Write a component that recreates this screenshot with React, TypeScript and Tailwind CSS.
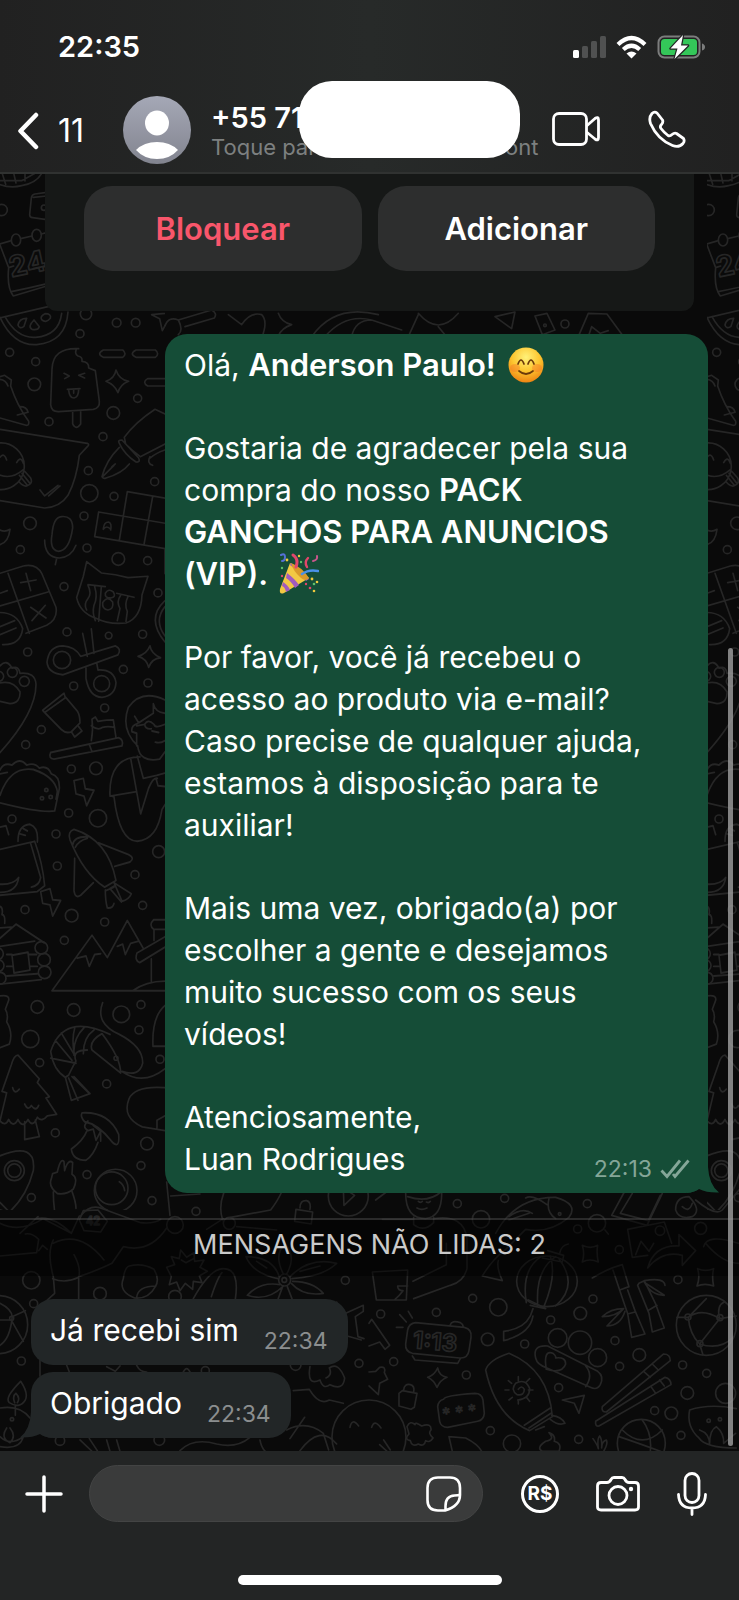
type Dot = [number, number, number];

const Dots = ({ items }: { items: Dot[] }) => (
    <>
        {items.map(([x, y, r]) => (
            <circle key={`${x}-${y}`} cx={x} cy={y} r={r} />
        ))}
    </>
);

const upperDots: Dot[] = [
    [5, 150, 17], [132, 143, 8], [258, 462, 17], [240, 521, 12], [350, 488, 13], [407, 488, 13],
    [29, 577, 12], [107, 605, 12], [103, 673, 19], [147, 785, 12], [340, 759, 19], [413, 715, 12],
    [309, 830, 12], [265, 932, 12], [464, 965, 12], [268, 1000, 26], [342, 1009, 12], [252, 1068, 12],
    [90, 1090, 19], [61, 1169, 12], [261, 1164, 12], [355, 1197, 19], [443, 1202, 12], [192, 1280, 12],
    [474, 1299, 12], [201, 1416, 12], [326, 1427, 10], [428, 1423, 12],
];

const lowerDots: Dot[] = [
    [83, 36, 12], [370, 88, 12], [221, 138, 12], [444, 129, 12], [314, 204, 12], [124, 269, 12],
    [77, 314, 12], [214, 387, 12], [288, 385, 19], [206, 519, 12], [294, 535, 26], [36, 537, 12],
    [168, 582, 12], [172, 678, 12], [405, 704, 12], [476, 635, 18], [75, 809, 12], [215, 827, 19],
    [428, 796, 12], [314, 846, 12], [193, 901, 12], [112, 1101, 19], [221, 1110, 19], [364, 1123, 25],
    [423, 1094, 12], [417, 1170, 12], [91, 1197, 26], [119, 1268, 12], [480, 1258, 12], [320, 1332, 12],
    [166, 1479, 12], [441, 1511, 19], [423, 1577, 12], [261, 1604, 12], [94, 1673, 12], [456, 1682, 12],
    [139, 450, 5], [126, 475, 5], [152, 471, 5], [348, 1255, 6],
];

const bottomLeftDots: Dot[] = [
    [588, 94, 12], [94, 301, 26], [300, 341, 19], [525, 350, 19], [101, 371, 12], [64, 543, 12],
    [1036, 301, 12], [1077, 550, 12], [887, 555, 16], [616, 572, 12], [35, 415, 6], [478, 780, 16],
    [180, 782, 14], [854, 300, 18], [688, 130, 18], [525, 135, 25], [36, 718, 5], [853, 300, 7],
];

const bottomRightDots: Dot[] = [
    [265, 71, 12], [407, 55, 12], [655, 71, 12], [336, 118, 26], [626, 147, 12], [751, 209, 12],
    [873, 152, 14], [995, 145, 18], [927, 299, 12], [311, 355, 12], [388, 382, 26], [672, 357, 12],
    [35, 402, 12], [202, 397, 12], [356, 478, 19], [545, 420, 12], [634, 400, 19], [467, 492, 12],
    [738, 482, 12], [811, 525, 19], [566, 474, 28], [633, 488, 35], [686, 533, 27], [752, 559, 12],
    [941, 555, 12], [1013, 580, 12], [955, 639, 19], [74, 545, 12], [292, 585, 12], [569, 623, 12],
    [857, 692, 12], [907, 700, 19], [936, 766, 12], [364, 752, 12], [429, 791, 26], [629, 778, 12],
    [684, 130, 26], [1019, 722, 5], [1053, 718, 5], [572, 102, 4],
];

// Doodle chat wallpaper. The left column repeats at the right edge.
const Wallpaper = () => (
    <svg
        aria-hidden="true"
        viewBox="0 174 739 1277"
        preserveAspectRatio="xMidYMin slice"
        className="absolute inset-0 h-full w-full fill-none stroke-[#262626]"
        strokeWidth="5"
        strokeLinecap="round"
        strokeLinejoin="round"
    >
        <defs>
            <clipPath id="above-divider">
                <rect x="0" y="174" width="165" height="1036" />
            </clipPath>
            <g id="doodle-column" clipPath="url(#above-divider)">
                <g transform="translate(0 160) scale(0.3333)">
                    <Dots items={upperDots} />
                    <path d="M-5 72q35 14 70 5q45-8 60-37M5 35l12 38M40 35l8 34M75 35v28M-5 62h70l40-22" />
                    <path d="M140 97l-35 5q-10 2-11 12l-5 50q0 8 9 9l42 6M100 112l40-4" />
                    <path d="M0 252l34-10M62 236l34-8M124 222l30-8M0 255l26 68q-6 60 14 85l108-32M34 395q50-10 108-24M26 323l15-5M100 326l45-10" />
                    <ellipse cx="48" cy="240" rx="14" ry="18" />
                    <ellipse cx="110" cy="226" rx="14" ry="18" />
                    <text x="34" y="352" fontSize="86" fontWeight="700" fontFamily="Inter, sans-serif" transform="rotate(-12 34 352)">24</text>
                    <path d="M-5 475L160 436M0 472q40 86 110 82q88-8 94-98M15 470q36 66 92 62q70-6 78-72" />
                    <path d="M135 461q20 0 16 14q-14 16-26 4q-6-10 10-18zM102 480q-20 20-6 28q18 4 22-8zM80 475q-22 0-26 20q4 14 18 4z" />
                    <path d="M455 464l62-6l-30 54l-8-36z" />
                    <path d="M236 566q-78-4-80 62l-4 106q2 22 24 21l104-7q20-4 18-24l-12-92l-20-8q2-18-20-20q2-14-12-16q-12-6-4-22zM218 754v38q10 20 24 0v-40M192 640l16 8l-14 8M254 640l-18 6l18 8M202 688l38-2M206 690q2 24 16 24q14-2 14-26M221 688v12" />
                    <path d="M310 570h58q14 12 0 22h-58q-22-10 0-22zM408 570h58q14 12 0 22h-58q-22-10 0-22zM495 656h-52q-18 10 0 22h52" />
                    <path d="M348 630q10 30 38 34q-26 10-32 34q-10-24-36-34q26-8 30-34z" />
                    <path d="M0 650l14-4l20 14l-2 18q20 60 54 106q2 14-8 12l-78-22M0 658q18 2 24 20M60 740q20 0 24 16M52 765l32-8" />
                    <path d="M0 808l262 42q8 4 0 10l-24 26q-8 70-34 120q-24 36-70 38L0 1022M120 990l14 18l40-32M146 1008l34-30" />
                    <path d="M-10 850a70 70 0 1 1-10 135M0 892q12-16 20 8M50 908q12-22 20 2M-5 944q40 16 74-14M58 946l24 30M66 940l22 28M74 934l18 20q8 18-12 24q-10 2-22-12" />
                    <path d="M495 762l-30-14q-60 40-92 84l4 20q20 20 44 38l74-38M358 850q-6-10 8-10l50 54q6 14-8 12q-34-22-50-56zM358 862q-40 40-52 88q4 8 12 4q48-14 70-42M308 950l34-34M336 920l10-8M450 890q-10 20 8 26M495 870q-26 8-44 24" />
                    <path d="M184 1070q34-4 34 34q-10 70-44 70q-26-6-18-50q4-52 28-54zM134 1140q0 52 44 54q36-2 50-38M170 1196l-4 18" />
                    <path d="M382 995l115 20M296 1056l200 34M284 1130l212 36M382 995l-24 146M458 1010l-26 144M296 1056l-12 74M495 1165v76" />
                    <path d="M310 1106q2-20 16-20q10 4 6 24M310 1108q10-14 22 0" />
                    <path d="M0 1110q14 8 30-2q-4 38-30 46M0 1240l70-22q40-8 56 24l42 100q6 36-28 54l-62 24M24 1240l64 180M0 1338l144-42M62 1268l46-8M78 1240l14 52M92 1342l46 32M136 1336l-40 46M0 1300l22-8" />
                    <path d="M-10 1358q60-4 78 48q-6 50-60 48M0 1400l44-18M0 1424l48-20" />
                    <path d="M260 1205l44 34q44 4 80 14l60-4l-18 56q-2 68-48 84q-50 6-90-14q-48-16-58-62l20-64zM264 1274l52 6M350 1300l52 12M264 1276q12 24 0 40q-14 18-4 34M284 1280q10 32-2 56q-6 24 4 46M304 1280l-8 104M362 1306q-14 20-2 40l-8 36M384 1310q-12 24-2 44l-4 30M316 1300q10-16 24-4q10 16-8 18q-18 0-16-14zM308 1328q14-22 30-2q4 22-14 24q-18-2-16-22z" />
                    <path d="M495 1322q-58 54 0 124M495 1340q-34 42 0 88" />
                </g>
                <g transform="translate(0 640) scale(0.3333)">
                    <Dots items={lowerDots} />
                    <circle cx="186" cy="60" r="26" />
                    <circle cx="305" cy="131" r="24" />
                    <circle cx="37" cy="97" r="15" />
                    <circle cx="73" cy="124" r="15" />
                    <circle cx="-4" cy="109" r="15" />
                    <circle cx="43" cy="1592" r="30" />
                    <circle cx="43" cy="1592" r="20" />
                    <circle cx="347" cy="1652" r="64" />
                    <circle cx="335" cy="1645" r="49" />
                </g>
                <g transform="translate(0 640) scale(0.3333 0.37)">
                    <path d="M242 44l104-28q20 8 8 24l-166 54q-44-4-47-34q6-44 48-44q36 2 53 28zM248-18l14 62M274-30l8 66M258 76v28q10 50 48 51q40-4 42-40q-6-36-54-34l-4-20" />
                    <path d="M450 16q4 22 32 32q-26 2-36 26q-6-24-32-30q26-6 36-28z" />
                    <path d="M0 70q20-20 36 6q20-8 24 14q46-4 48 30q0 76-108 184M0 116q40-8 60 24q2 30-30 32l-30-6" />
                    <path d="M192 144l-64 46l6 6l62-40zM134 196l50 46q14 12 30 6l26-24q0-20-8-32l-36-38M214 248l10 14l22-16l-10-12M152 304l204-40q16 6 10 22l-204 36q-18-2-10-18zM268 282l8 20M274 272q6-30 2-58l10-6l8 12q30-4 46-4l8 48M274 232q20 14 34 4q14-4 36 0" />
                    <path d="M495 162q-70-30-110 20q-24 60 28 104q6 46 66 36l16-20M404 206l12 18l44-26v-26q6 24 35 26M412 226q-20 6-16 22l14 4v34M410 232l24-4q10-16 28 0q4 12 33 0M434 228q2 14 20 12M456 246l20 4M466 276q14 4 29-4" />
                    <path d="M420 316q-94 0-90 104l12 4q16 120 70 120q60-4 74-86l10-14M392 320l30 150l24-70q14-30 26-26M412 314l18 60l40-8l24-6M330 422l80-12M468 374l6 20l22 2" />
                    <path d="M0 352q10-22 36-14q24-22 44 0q24-8 38 8q26-8 36 16q26 6 24 40l-14 60q-40 6-164-22M0 420q30-80 100-70q66 20 72 60l-4 20M0 362l22-4" />
                    <path d="M222 380l28-6l6 28l26 4l-22 42l-8-26l-24-6zM122 680l28-8l8 30l24 2l-24 42l-8-30l-22-4z" />
                    <path d="M0 566l104-22q24 60 30 120l-22 16L0 690M92 550l30 92q-4 22-28 26M54 544q0-44 36-46q26 8 22 48M60 524l16 4M70 510l12 6M0 506l18-4l8 24M0 660q40 2 56-18q-6 40-56 40" />
                    <path d="M222 512q-20 6-12 28q40 90 104 128l34-18q-24-110-126-138zM218 554q4-24 46-22M226 560q10-18 36-24M296 548l90 32q20 10 4 20l-46 12M224 590l-2 88q4 22 20 12l38-34M316 676q0 30 6 48q16 2 20-12M342 656l52 30q-8 16-28 20zM330 672l34 36M344 664l-14 8M316 678l26-10" />
                    <path d="M0 720q10 4 6 22q10 0 8 24M0 806l48-38l84 50M0 828l104-14M0 778l34-2M0 930l124-12M36 852l48-8l6 48l-48 8zM20 850h16M86 850h24M20 882h20M90 882h22M20 908l92-6" />
                    <ellipse cx="124" cy="832" rx="19" ry="17" />
                    <ellipse cx="132" cy="864" rx="19" ry="17" />
                    <ellipse cx="134" cy="898" rx="19" ry="17" />
                    <ellipse cx="-8" cy="848" rx="18" ry="16" />
                    <ellipse cx="-6" cy="880" rx="18" ry="16" />
                    <ellipse cx="0" cy="914" rx="18" ry="16" />
                    <path d="M156 948l120-150l46 60l60-100l48 76M156 948h340M232 860l26-6l10 28l16-32l18-2M352 828l16-6l8 28l16-30l24-6M495 756h-34q-16 14 0 26h34M462 784v28M495 802l-84 44q-8 20 8 26l76-42M454 862v60M398 948q40-26 98-26" />
                    <path d="M0 962q30-4 26 12l-10 24q10 14 4 34q20 30 8 60l-28 10" />
                    <path d="M308 980q-24 56 50 86q72 34 70 78q-10 38-62 22q64 40 130-8M330 1066q-140-60-178 46q8 50 44 70l10-6q14-26 22-38q-14-30 34-30M196 1182l18 62l56-18l-48-46M206 1184l28 60M216 1180l50 44M152 1130l76 14M166 1082l50 54M184 1062l40 60M224 1050q-10 30 0 74M252 1048q-34 30-30 74M282 1054q-32 20-32 64M306 1064q-40 20-30 44l86 62q0-40-56-106" />
                    <path d="M54 1122q-12 0-20 26l-28 72l14 4l-20 76q16 16 26-4q14 24 28 0q14 26 30 0q14 24 28-6q14 14 30-4l28-4l-32-44l10-4l-36-38l6-10q-44-44-64-64zM74 1302v48l44-8l-12-44M38 1210q6 20 20 4M74 1254q10 20 20 4q14 18 22 0" />
                    <path d="M246 1278q80-4 110 58q4 44-22 18q-40-46-80-52q-14-14-8-24zM264 1300q-20 16 0 26l16-4l8 30l14-24M260 1328q-10 24-46 48q4 30 44 30q22-12 36-48M280 1312l22 16v26" />
                    <path d="M495 1210q-90-6-108 30q-22 50 40 76l68 10M495 1286l-24 12v20M495 988q-40 30-36 110h36" />
                    <path d="M0 1394q110-40 100 40q-20 70-72 112l-28-26M0 1540l24 8" />
                    <path d="M172 1496q-28-20-18-40l4-14l14-4q10-40 20-28l2 24q10-32 24-22l-2 32q20 10 4 40q-20 16-48 12zM160 1492q0 60 18 100M216 1490q12 30 12 46M358 1464q14 8 16 24" />
                </g>
            </g>
        </defs>
        <use href="#doodle-column" />
        <use href="#doodle-column" x="707" />

        {/* strip between the contact card and the first message */}
        <g transform="translate(165 300) scale(0.3333)">
            <path d="M0 78q10-30 40-18l100-30q18 10 8 24l-88 26M40 60q16 30 0 44M190 44l40 30q26-40 60-30q20 20 0 70M340 40q10 28 40 34q-30 10-40 34M440 110q70-100 200-66M480 110q60-70 140-50M560 110q10-50 60-50l90 30M760 40q60 70 120 0M730 110l30-66M820 80l20 24M990 50l60-14l-10 50zM1110 48l36-8l24 50l-38 14zM1240 110l30-70l56 2l50 68M1270 110l10-30l26 20l24-8" />
            <circle cx="1200" cy="72" r="12" />
            <circle cx="1140" cy="76" r="4" />
        </g>

        <g transform="translate(0 1180) scale(0.3333)">
            <Dots items={bottomLeftDots} />
            <path d="M0 130q60 30 130-14l84 44l24-52M60 160l54-50M0 228l110-10l6-40q-20-20-40-16M116 212l12-16l14 12M160 180q-20 40 0 110l4 50l-44 40M236 368V290q60-20 100-40l34-50q80 20 130-56M160 190q80-40 152 50M222 224q22 40 14 68q-40 20-78 4M110 116q50-10 104 44M242 108q30-40 70-20l110 40q40 4 60-10" />
            <path d="M250 92l44-2l28 34l-20 32l-50-4l-14-32z" />
            <text x="258" y="136" fontSize="34" fontFamily="Inter, sans-serif">42</text>
            <path d="M668 120q-20-60 30-130M692 112l120-22q60-80 30-110M620 148l50-32M710 140l120 10M512 48l88-6M510 106l-10-100M888 88l50 8l-4 36l-50-8zM900 84q0-24 20-22q14 4 10 26" />
            <circle cx="1045" cy="48" r="60" />
            <path d="M1030 24l34 22l-32 30z" />
            <path d="M500 262l24-8l-10-24l24 6l4-26l18 22l22-14l2 26l28-4l-12 22l22 12l-24 14l8 20l-26-4l-2 24l-22-18l-16 22l-10-26l-22 8l6-24zM544 240l14 8l22-12" />
            <path d="M388 258q40-10 74 10q18 30 4 52q-20 38-62 34q-50-20-34-58q4-34 18-38zM410 352q4-34 58-34M580 356q50-90 90-90q50 0 36 92M634 350q20-60 32-72" />
            <path d="M870 290q60-60 140-40q-40 40-134 46M878 304q60 0 92 36q-60 10-96-30M840 314q-60-10-98 32q60 20 108-28M838 290q-20-60-100-60q20 50 96 66M850 282q-30-60 6-90q34 40 4 90M848 320l-14 38M862 320l14 36M900 274l60-16M800 264l-30-20" />
            <circle cx="-4" cy="434" r="87" />
            <path d="M0 370q40 20 36 46q-6 60-36 80M36 410l40-18M0 420l30 0M36 424l34 60" />
            <path d="M1010 366l14 40l66-30v18l-24 16l8 60l18 6M1024 406l10 60l50 14M120 540v48M200 556l8 20M320 560l26 14l14-16M410 556q10 20 30 20M550 576q10-20 20 0" />
            <path d="M62 604q-50 50-34 64q30 20 48-8q10-20-14-56zM44 668q-8-20 4-28q14 14 4 28M0 684q60-10 90 30M0 800q60 10 70-30M20 744q-20 30 10 44q20-20 0-44M46 676v30M0 770q30 30 70 0" />
            <path d="M880 632l48-4q30 50 60 32l42 10M930 560q-10 60 30 40q10 30 30 14q40 20 44-20q-20-50-46-30q10 20-10 30M870 776l44-64M860 750q60-30 110 10l16 50M900 812q60-80 110-20" />
            <path d="M240 780l36 34M268 776l24 36M320 780l10 34M350 780l10 34M540 812q40-40 110-20q60 14 100-20M780 780q4 24 16 34" />
            <circle cx="1107" cy="771" r="111" />
            <path d="M1050 742q6-30 26-4" />
        </g>

        <g transform="translate(369 1180) scale(0.3333)">
            <Dots items={bottomRightDots} />
            <path d="M110 40q0 76 60 76q50-6 48-80M116 50q60 20 100-14M148 64q8 6 12 0M172 66q8 4 12-2M144 84q14 8 30 0M134 112v22q30 24 60-6v-16M194 116q90-14 100 60v90q-10 40-50 50l-110 40M232 190v64l-100 50M10 276l106-6l-4 90H22zM116 318l-30 0q0 14 16 14q-10 14-24 26M40 118h90M20 60l40-30" />
            <path d="M380 160q60-110 180-108q70 20 40 60q-60 50-130 36l-60 60q-40 30-70 80l60 14q-18-40-12-60M470 54q20-12 64 20M480 100l-60 20M420 110q40-30 70-10M540 56q-10 40 20 60" />
            <path d="M766 36l-38 70l106 30l46-96M790 40l-36 60l84 22l36-76M776 148l110-22l22 64M776 148l14 84l46-6M800 224l16-40l24 30l14-24M836 264q20-70 94-66v-34l50 48l-40 44v-30q-60-16-104 38" />
            <path d="M920 90q0-40 40-40q40 40 10 60q-40 10-50-20zM940 80q20 20 30-10M980 60q60 50 80 30l50-60M1010 190q50 60 100 60M1004 200q10-40 104-10M708 150l10 12" />
            <path d="M640 196q24 12 46 0q-4 24 2 50q-26-12-48 0q8-24 0-50zM986 266q24 10 48 0q-6 24 0 52q-26-10-50 0q10-24 2-52z" />
            <ellipse cx="534" cy="304" rx="91" ry="76" />
            <path d="M516 230q-60 40-44 138M560 230q-60 40-54 140M544 228q20 60-20 154M570 236q60 80-10 142M520 234l60 12l4-20l-48-14M572 220q4-24 26-28M478 360l50 24M484 376l46 10M492 386l-8 22q-20 40-80 46v28q80-20 88-74" />
            <path d="M670 294q50-30 90-40l20 66l-28 10q20 60 24 70l12 72l40-10l-30-70l-22-62M752 330l-20-60M776 402l22-6M810 310l16-8l34 70l26 72l-36 12l-10-56l-34-84zM826 302q60-10 62 14M826 306q20 40 60 40l-56-36M840 390l24-14M764 386q-40 0-64 24q40 0 64-24l-50 52q40 0 54-44" />
            <circle cx="1012" cy="436" r="90" />
            <path d="M960 410l52-54M958 412q40-30 94 4l-60 76q-30-30-34-80zM1052 416l50-8M992 492l10 32M958 412l-34 0M1052 416q-10-40 14-50M992 492q60 20 100-20" />
            <circle cx="957" cy="411" r="9" />
            <circle cx="1053" cy="413" r="9" />
            <circle cx="993" cy="491" r="9" />
            <path d="M0 430l8-12l54 78l-14 12l-16-22l-32 12M92 404l20 22M118 394l12 20M82 442l20 0" />
            <path d="M140 428l146 14q24 6 20 30l-6 40q-4 24-28 22l-142-14q-22-6-20-28l6-42q4-20 24-22zM244 434q4-14 30-6q10 6 8 14M130 528l8 12l128 10l8-14" />
            <text x="130" y="504" fontSize="72" fontWeight="700" fontFamily="Inter, sans-serif" transform="rotate(5 130 504)">1:13</text>
            <path d="M0 576l20-2l12-12q20-4 14 16l10 20l-24 12l-4 34l-28-26M90 640l10-8l44 8l-8 42l-10 6l-36-10zM104 630q2-20 20-16q14 4 10 22M206 564q4 24 28 28q-20 8-30 30q-10-22-28-30q20-6 30-28z" />
            <path d="M420 520q-60 20-70 50q30 140 132 182l68-42q-10-140-130-190zM466 736l78-52M480 744l66-44M548 706q30 4 40 24q-20 8-44-12M500 750l26-10" />
            <path d="M448 628q10-14 18 0q0 20-22 16q-20-14-4-34q30-16 42 16q0 30-36 34M448 590v12M448 660v12M408 630h12M478 630h14M418 602l10 8M472 606l10-10M420 660l10-8M474 654l8 10" />
            <path d="M500 534q-10-40 36-36l150 76q20 14 8 40q-10 18-30 8l-130-58q-30-10-34-30zM532 568q-10-60 20-48q10 8 8 14q30-4 30 18q-10 30-58 16zM650 620q24-34 0-62" />
            <path d="M580 660l66-14l-16 54l-14-30zM700 680l184-158q20 0 20 20L712 696q-16 0-12-16zM680 724l208-132q18 4 18 22L690 738q-12 2-10-14zM824 574l20 18M850 552l18 18M846 620l14 20M872 600l14 18" />
            <path d="M224 658q0-12 94-18q20 0 24 20l4 40q-2 20-20 24l-90 18q-20 0-24-18l-6-44q2-18 18-22z" />
            <text x="222" y="720" fontSize="50" strokeWidth="3" fontFamily="Inter, sans-serif" transform="rotate(-7 222 720)">* * *</text>
            <path d="M8 742q8-26 28 2M32 794l22 20M44 780l20 30M114 740q10-20 24-6q0-10 20 4q30-10 28 12q-10 10 6 24q-10 16-22 8q-4 20-22 10q-20 10-24-10q-20-4-4-20zM240 770l50 4q40 20 50 44M240 770l10 44M540 758q20 20-10 26q-30 20-10 30h50q10-24-14-30q4-20-16-26M672 776q14 20 16 30q-4-30 4-38q8 10 6 36q0-20 14-24q6 10-8 34" />
            <circle cx="817" cy="790" r="72" />
            <path d="M750 770q60 20 140 50M760 750q60 60 120 0M820 720q30 40 24 94" />
            <path d="M962 690q60-20 140-4M962 690q-10 50 28 84q20 30 112 30M992 750q30 10 30 44M1022 790q0-40 20-50q24 20 22 50M1064 790l36-30" />
            <circle cx="1070" cy="640" r="30" />
        </g>
    </svg>
);

const SmileEmoji = () => (
    <svg viewBox="0 0 36 36" role="img" aria-label="😊" className="ml-1 inline-block h-9 w-9 align-[-7px]">
        <defs>
            <radialGradient id="smile" cx="50%" cy="28%" r="72%">
                <stop offset="0" stopColor="#fff27a" />
                <stop offset="0.55" stopColor="#fdc52f" />
                <stop offset="1" stopColor="#ee8413" />
            </radialGradient>
        </defs>
        <circle cx="18" cy="18" r="17.5" fill="url(#smile)" />
        <ellipse cx="7" cy="21" rx="5" ry="4" fill="#f4702b" opacity=".4" />
        <ellipse cx="29" cy="21" rx="5" ry="4" fill="#f4702b" opacity=".4" />
        <path d="M10 17q3-8 6 0M20 17q3-8 6 0M11 24q7 6 14 0" fill="none" stroke="#6b3a0a" strokeWidth="1.7" strokeLinecap="round" />
    </svg>
);

const PartyEmoji = () => (
    <svg viewBox="0 0 40 42" role="img" aria-label="🎉" className="ml-0.5 inline-block h-[42px] w-10 align-[-10px]">
        <path d="M11 10Q21 16 30 25L5 40Q0 42 1 36Z" fill="#f3c843" />
        <path d="M8 20q8 6 12 12l-4 3q-4-7-9-10zM4 29q5 3 7 8l-4 2q-1-5-4-6zM11 12q10 7 16 16l3-2Q23 16 12 10Z" fill="#a15bbd" />
        <path d="M12 10q11 4 18 15q-3 4-8 0q-8-7-10-15z" fill="#d99a2b" />
        <path d="M14 2q6 4 3 12" fill="none" stroke="#e2466b" strokeWidth="3" strokeLinecap="round" />
        <path d="M29 5q-4 4-1 9" fill="none" stroke="#e2466b" strokeWidth="2.4" strokeLinecap="round" />
        <path d="M23 21q7-5 16-3" fill="none" stroke="#4a91e8" strokeWidth="2.6" strokeLinecap="round" />
        <path d="M2 2q4-2 4 2q0 4-3 4" fill="none" stroke="#5570d6" strokeWidth="2" strokeLinecap="round" />
        <path d="M34 8q5-1 4-5" fill="none" stroke="#c9578c" strokeWidth="2" strokeLinecap="round" />
        <g fill="#f0c93c">
            <circle cx="8" cy="7" r="1.4" />
            <circle cx="20" cy="3" r="1.2" />
            <circle cx="33" cy="26" r="1.4" />
            <circle cx="38" cy="29" r="1.3" />
            <circle cx="35" cy="38" r="1.3" />
        </g>
        <g fill="#5fc06a">
            <circle cx="22" cy="9" r="1.2" />
            <circle cx="35" cy="31" r="1.3" />
            <circle cx="3" cy="15" r="1.2" />
        </g>
        <g fill="#e2466b">
            <circle cx="31" cy="35" r="1.3" />
            <circle cx="3" cy="23" r="1.2" />
            <circle cx="27" cy="31" r="1.2" />
        </g>
    </svg>
);

const StatusBar = () => (
    <div className="flex h-[81px] items-start justify-between pt-[27px] pr-[34px] pl-[58px]">
        <span className="text-[29px] leading-10 font-semibold">22:35</span>
        <div className="flex h-10 items-center gap-2.5">
            <svg viewBox="0 0 33 24" className="h-6 w-[33px]" aria-label="Sinal" role="img">
                <rect x="0" y="15" width="6" height="8" rx="1.5" fill="#fff" />
                <rect x="9" y="11" width="6" height="12" rx="1.5" fill="#505151" />
                <rect x="18" y="6" width="6" height="17" rx="1.5" fill="#505151" />
                <rect x="27" y="1" width="6" height="22" rx="1.5" fill="#505151" />
            </svg>
            <svg viewBox="0 0 31 24" className="h-6 w-[31px]" aria-label="Wi-Fi" role="img">
                <path d="M2 9.5Q15.5-3.5 29 9.5M7.3 14.5Q15.5 7 23.7 14.5" fill="none" stroke="#fff" strokeWidth="4.2" />
                <path d="M10.5 18.5q5-4 10 0L15.5 23.5z" fill="#fff" />
            </svg>
            <svg viewBox="0 0 48 26" className="h-[26px] w-12" aria-label="Bateria" role="img">
                <rect x="1.5" y="2.5" width="41" height="21" rx="6" fill="none" stroke="#7c7d7d" strokeWidth="2" />
                <rect x="4" y="5" width="36" height="16" rx="3.5" fill="#34c759" />
                <path d="M45 9.5q3 1 3 3.5t-3 3.5z" fill="#7c7d7d" />
                <path d="M26 1L13.5 14.5h7L17.5 25L31 11.5h-7z" fill="#fff" stroke="#232525" strokeWidth="2.5" paintOrder="stroke" strokeLinejoin="round" />
            </svg>
        </div>
    </div>
);

const Header = () => (
    <header className="relative border-b-2 border-[#303231] bg-linear-to-r from-[#212121] via-[#272a29] to-[#212121]">
        <StatusBar />
        <div className="flex h-[91px] items-center pt-1 pr-[53px] pl-[17px]">
            <button type="button" aria-label="Voltar" className="flex h-[68px] items-center gap-[18px] pt-1">
                <svg viewBox="0 0 22 38" className="h-[38px] w-[22px]" fill="none" stroke="#fff" strokeWidth="4.5" strokeLinecap="round" strokeLinejoin="round">
                    <path d="M19 3L3.5 19L19 35" />
                </svg>
                <span className="w-7 text-[32px] leading-8">11</span>
            </button>
            <svg viewBox="0 0 68 68" className="mt-0.5 ml-[38px] h-[68px] w-[68px] shrink-0" role="img" aria-label="Foto do contato">
                <defs>
                    <linearGradient id="avatar" x1="0" y1="0" x2="0" y2="1">
                        <stop offset="0" stopColor="#a5a8b6" />
                        <stop offset="1" stopColor="#82848f" />
                    </linearGradient>
                </defs>
                <circle cx="34" cy="34" r="34" fill="url(#avatar)" />
                <ellipse cx="34" cy="27" rx="12" ry="12.5" fill="#fff" />
                <path d="M13 54q8-8 21-8t21 8q-8 9-21 9t-21-9z" fill="#fff" />
            </svg>
            <div className="ml-5 min-w-0 flex-1">
                <h1 className="pt-1.5 text-[29px] leading-[30px] font-semibold whitespace-nowrap">+55 71</h1>
                <p className="text-[22px] leading-7 whitespace-nowrap text-[#7d8080]">Toque para abrir dados do cont</p>
            </div>
            <button type="button" aria-label="Chamada de vídeo" className="shrink-0">
                <svg viewBox="0 0 48 34" className="h-[34px] w-12" fill="none" stroke="#fff" strokeWidth="2.8" strokeLinejoin="round">
                    <rect x="1.5" y="1.5" width="33" height="31" rx="5.5" />
                    <path d="M34.5 14L43 6.5q3.5-2.5 3.5 1.5v17.5q0 4-3.5 1.5L34.5 20" />
                </svg>
            </button>
            <button type="button" aria-label="Ligar" className="ml-12 shrink-0">
                <svg viewBox="0 0 38 38" className="h-[38px] w-[38px]" fill="none" stroke="#fff" strokeWidth="2.8" strokeLinejoin="round">
                    <path d="M4 3.5Q6.5 1 9 3L14.5 10Q15.5 12 13.5 14.5Q11.5 16.5 13 18.5Q16 22.5 20 25.5Q22 26.5 24 24.5Q26.5 22.5 28.5 23.5L35.5 28.5Q37 31 35 33.5Q31 38 24.5 35.5Q9.5 29.5 2.5 13.5Q0.5 7.5 4 3.5Z" />
                </svg>
            </button>
        </div>
        {/* covers the phone number */}
        <div className="absolute top-[81px] left-[299px] h-[77px] w-[221px] rounded-[33px] bg-white" />
    </header>
);

const ContactCard = () => (
    <section className="mx-[45px] grid grid-cols-2 gap-4 rounded-b-xl bg-[#161817] px-[39px] pt-3 pb-10">
        <button type="button" className="h-[85px] rounded-[28px] bg-[#2d2e2e] pt-0.5 text-[31px] font-semibold text-[#f9566b]">
            Bloquear
        </button>
        <button type="button" className="h-[85px] rounded-[28px] bg-[#2d2e2e] pt-0.5 text-[31px] font-semibold">
            Adicionar
        </button>
    </section>
);

const SentMessage = () => (
    <article className="relative mt-[23px] mr-[31px] ml-auto flex w-[543px] flex-col gap-[41px] rounded-[22px] bg-[#154d37] pt-2.5 pr-[18px] pb-[13px] pl-[19px] text-[30px] leading-[42px]">
        <p className="h-[42px]">
            Olá, <strong className="text-[31px] font-semibold">Anderson Paulo!</strong> <SmileEmoji />
        </p>
        <p className="h-[168px] pr-10">
            Gostaria de agradecer pela sua compra do nosso{" "}
            <strong className="text-[31px] font-semibold">PACK GANCHOS PARA ANUNCIOS (VIP).</strong> <PartyEmoji />
        </p>
        <p className="pr-10">
            Por favor, você já recebeu o acesso ao produto via e-mail? Caso precise de qualquer ajuda, estamos à
            disposição para te auxiliar!
        </p>
        <p className="pr-10">
            Mais uma vez, obrigado(a) por escolher a gente e desejamos muito sucesso com os seus vídeos!
        </p>
        <div className="flex items-end justify-between">
            <p>
                Atenciosamente,
                <br />
                Luan Rodrigues
            </p>
            <div className="flex items-center gap-2 text-[#84a698]">
                <time className="text-[23px] leading-[22px]">22:13</time>
                <svg viewBox="0 0 30 20" className="h-5 w-[30px]" fill="none" stroke="currentColor" strokeWidth="2.8" role="img" aria-label="Entregue">
                    <path d="M1.5 11.5L7 17.5L20 1.5M13 15L15 17.5L28.5 1.5" />
                </svg>
            </div>
        </div>
        <svg viewBox="0 0 32 26" className="absolute -right-[11px] bottom-0 h-[26px] w-8" aria-hidden="true">
            <path d="M0 26Q8 25 12 22Q20 26 32 25.5Q22 18 21 0L0 0Z" fill="#154d37" />
        </svg>
    </article>
);

const ReceivedMessage = ({ text, time, tail }: { text: string; time: string; tail?: boolean }) => (
    <article className="relative flex h-[66px] w-fit items-start gap-[25px] rounded-[22px] bg-[#222627] pr-5 pl-[19px]">
        <p className="text-[30px] leading-[62px]">{text}</p>
        <time className="pt-[30px] text-[23px] leading-6 text-[#8b8e8f]">{time}</time>
        {tail && (
            <svg viewBox="0 0 32 26" className="absolute bottom-0 -left-[11px] h-[26px] w-8" aria-hidden="true">
                <path d="M32 26Q24 25 20 22Q12 26 0 25.5Q10 18 11 0L32 0Z" fill="#222627" />
            </svg>
        )}
    </article>
);

const Composer = () => (
    <footer className="flex flex-col items-center bg-[#232525]">
        <form className="flex w-full items-center pt-3.5 pr-8 pl-[25px]">
            <button type="button" aria-label="Anexar" className="shrink-0">
                <svg viewBox="0 0 38 38" className="h-[38px] w-[38px]" stroke="#fff" strokeWidth="3.5" strokeLinecap="round">
                    <path d="M19 2v34M2 19h34" />
                </svg>
            </button>
            <div className="ml-[26px] flex h-[57px] min-w-0 flex-1 items-center rounded-full border border-[#434444] bg-[#3a3b3b] pr-5 pl-6">
                <input type="text" aria-label="Mensagem" className="w-full min-w-0 flex-1 bg-transparent text-[30px] outline-none" />
                <button type="button" aria-label="Figurinhas" className="shrink-0">
                    <svg viewBox="0 0 36 36" className="h-9 w-9" fill="none" stroke="#fff" strokeWidth="2.6" strokeLinejoin="round">
                        <path d="M34 19V12Q34 1.5 24 1.5H12Q1.5 1.5 1.5 12v12q0 10.5 10.5 10.5h7Q34 30 34 19ZM19.5 34.5V30q0-10 9-10.5q4 0 5.5-1" />
                    </svg>
                </button>
            </div>
            <button type="button" aria-label="Pagamento" className="ml-[38px] h-[38px] w-[38px] shrink-0 rounded-full border-3 border-white text-[19px] leading-8 font-bold">
                R$
            </button>
            <button type="button" aria-label="Câmera" className="ml-[37px] shrink-0">
                <svg viewBox="0 0 44 36" className="h-9 w-11" fill="none" stroke="#fff" strokeWidth="2.8" strokeLinejoin="round">
                    <path d="M5 6.5H11Q13.5 6.5 15 3.5Q16 1.5 18 1.5H26Q28 1.5 29 3.5Q30.5 6.5 33 6.5H39Q42.5 6.5 42.5 10V31Q42.5 34 39 34H5Q1.5 34 1.5 31V10Q1.5 6.5 5 6.5Z" />
                    <circle cx="22" cy="19.5" r="9" />
                    <circle cx="35" cy="13" r="2.2" fill="#fff" stroke="none" />
                </svg>
            </button>
            <button type="button" aria-label="Gravar áudio" className="ml-[37px] shrink-0">
                <svg viewBox="0 0 30 44" className="h-11 w-[30px]" fill="none" stroke="#fff" strokeWidth="2.8" strokeLinecap="round">
                    <rect x="8" y="1.5" width="14" height="29" rx="7" />
                    <path d="M1.5 22.5Q2 36 15 36T28.5 22.5M15 36v6.5" />
                </svg>
            </button>
        </form>
        <div className="mt-[53px] mb-[15px] h-2.5 w-[264px] rounded-full bg-white" />
    </footer>
);

export default function App() {
    return (
        <div lang="pt-BR" className="flex min-h-screen flex-col bg-[#0a0a0a] font-[Inter,'Liberation_Sans',sans-serif] text-white">
            <Header />
            <main className="relative flex-1 overflow-hidden pb-[13px]">
                <Wallpaper />
                <div className="relative">
                    <ContactCard />
                    <SentMessage />
                    <h2 className="mt-[25px] h-[58px] border-t-2 border-white/15 bg-black/50 text-center text-[27px] leading-[50px] text-[#cacaca]">
                        MENSAGENS NÃO LIDAS: 2
                    </h2>
                    <div className="mt-[23px] flex flex-col gap-[7px] pl-[31px]">
                        <ReceivedMessage text="Já recebi sim" time="22:34" />
                        <ReceivedMessage text="Obrigado" time="22:34" tail />
                    </div>
                </div>
                <div className="absolute right-1.5 bottom-[5px] h-[798px] w-[5px] rounded-full bg-[#a0a0a0]/80" />
            </main>
            <Composer />
        </div>
    );
}
